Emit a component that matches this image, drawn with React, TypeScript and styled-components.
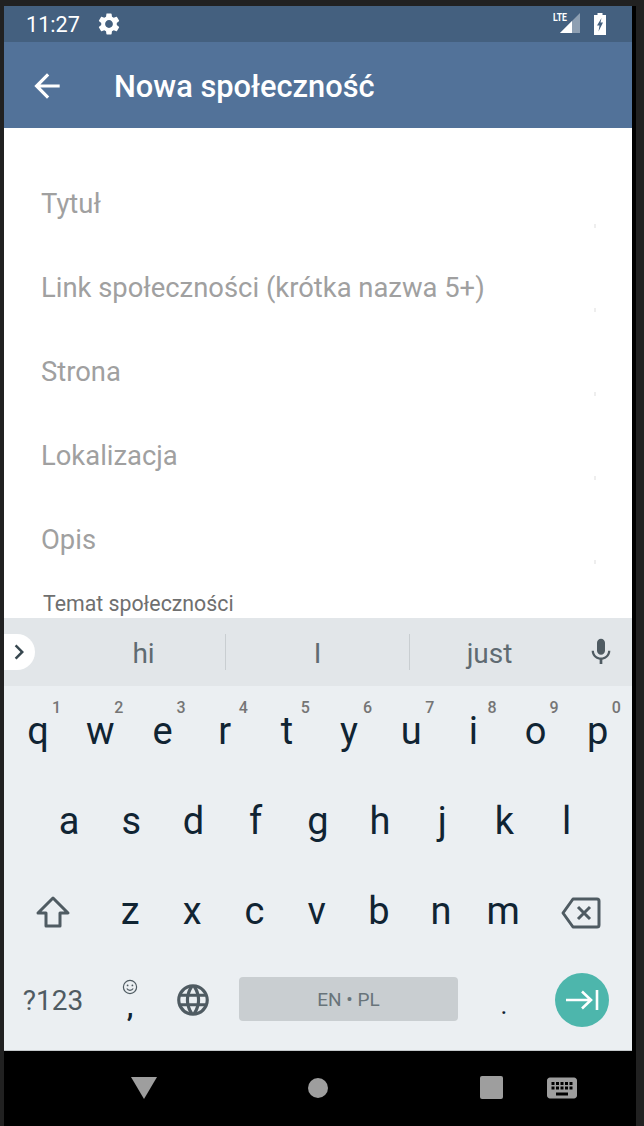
import * as React from "react";
import styled, { createGlobalStyle } from "styled-components";
import { MdArrowBack, MdSettings, MdMic, MdLanguage, MdKeyboard, MdChevronRight } from "react-icons/md";

const GlobalStyle = createGlobalStyle`
  html, body {
    margin: 0;
    padding: 0;
    background: #212121;
    font-family: Roboto, "Liberation Sans", sans-serif;
  }
`;

const FIELDS = ["Tytuł", "Link społeczności (krótka nazwa 5+)", "Strona", "Lokalizacja", "Opis"];

const ROW_ONE = [
  ["q", "1"],
  ["w", "2"],
  ["e", "3"],
  ["r", "4"],
  ["t", "5"],
  ["y", "6"],
  ["u", "7"],
  ["i", "8"],
  ["o", "9"],
  ["p", "0"],
];
const ROW_TWO = ["a", "s", "d", "f", "g", "h", "j", "k", "l"];
const ROW_THREE = ["z", "x", "c", "v", "b", "n", "m"];

const ShiftIcon = () => (
  <svg width="36" height="34" viewBox="0 0 36 34" fill="none">
    <path
      d="M18 3 L33 18 H25 V31 H11 V18 H3 Z"
      stroke="#4f5b62"
      strokeWidth="3"
      strokeLinejoin="round"
    />
  </svg>
);

const BackspaceIcon = () => (
  <svg width="40" height="32" viewBox="0 0 40 32" fill="none">
    <path
      d="M12 2 H36 a2 2 0 0 1 2 2 V28 a2 2 0 0 1 -2 2 H12 L2 16 Z"
      stroke="#4f5b62"
      strokeWidth="3"
      strokeLinejoin="round"
    />
    <path d="M17 10 L29 22 M29 10 L17 22" stroke="#4f5b62" strokeWidth="3" />
  </svg>
);

const SmileIcon = () => (
  <svg width="16" height="16" viewBox="0 0 16 16" fill="none">
    <circle cx="8" cy="8" r="6.6" stroke="#4f5b62" strokeWidth="1.2" />
    <circle cx="5.6" cy="6.4" r="0.9" fill="#4f5b62" />
    <circle cx="10.4" cy="6.4" r="0.9" fill="#4f5b62" />
    <path d="M4.8 9.6 C6 12 10 12 11.2 9.6" stroke="#4f5b62" strokeWidth="1.1" />
  </svg>
);

const NextIcon = () => (
  <svg width="34" height="22" viewBox="0 0 34 22" fill="none">
    <path d="M1 11 H25 M17 2.5 L26 11 L17 19.5" stroke="#fff" strokeWidth="2.6" />
    <path d="M32 1 V21" stroke="#fff" strokeWidth="2.6" />
  </svg>
);

const LteIcon = () => (
  <svg width="28" height="22" viewBox="0 0 28 22">
    <path d="M27 0 V20 H7 Z" fill="#fff" fillOpacity="0.4" />
    <path d="M19 8 V20 H7 Z" fill="#fff" />
    <text x="0" y="8" fontFamily="Roboto, sans-serif" fontSize="10" fontWeight="700" fill="#fff" textLength="14" lengthAdjust="spacingAndGlyphs">
      LTE
    </text>
  </svg>
);

const BatteryIcon = () => (
  <svg width="12" height="22" viewBox="0 0 12 22">
    <path d="M3.5 0 H8.5 V2 H12 V22 H0 V2 H3.5 Z" fill="#fff" />
    <path d="M7.5 5 L3 12.5 H5.5 L4.5 18.5 L9 9.5 H6.5 Z" fill="#44607f" />
  </svg>
);

export default function App() {
  return (
    <>
      <GlobalStyle />
      <Frame>
        <Screen>
          <StatusBar>
            <Clock>11:27</Clock>
            <MdSettings size={26} color="#fff" />
            <StatusRight>
              <LteIcon />
              <BatteryIcon />
            </StatusRight>
          </StatusBar>
          <AppBar>
            <MdArrowBack size={38} color="#fff" />
            <Title>Nowa społeczność</Title>
          </AppBar>
          <Form>
            {FIELDS.map((label) => (
              <Field key={label}>{label}</Field>
            ))}
            <SectionLabel>Temat społeczności</SectionLabel>
          </Form>
          <Suggestions>
            <Expand>
              <MdChevronRight size={30} color="#37474f" />
            </Expand>
            <FirstSuggestion>hi</FirstSuggestion>
            <Divider />
            <Suggestion>I</Suggestion>
            <Divider />
            <LastSuggestion>just</LastSuggestion>
            <MicSlot>
              <MdMic size={32} color="#4f5b62" />
            </MicSlot>
          </Suggestions>
          <Keys>
            <NumberRow>
              {ROW_ONE.map(([letter, hint]) => (
                <Key key={letter}>
                  {letter}
                  <Hint>{hint}</Hint>
                </Key>
              ))}
            </NumberRow>
            <HomeRow>
              {ROW_TWO.map((letter) => (
                <Key key={letter}>{letter}</Key>
              ))}
            </HomeRow>
            <ShiftRow>
              <ShiftKey>
                <ShiftIcon />
              </ShiftKey>
              {ROW_THREE.map((letter) => (
                <Key key={letter}>{letter}</Key>
              ))}
              <BackspaceKey>
                <BackspaceIcon />
              </BackspaceKey>
            </ShiftRow>
            <BottomRow>
              <Symbols>?123</Symbols>
              <Comma>
                <SmileIcon />
                <CommaGlyph>,</CommaGlyph>
              </Comma>
              <Key>
                <MdLanguage size={38} color="#4f5b62" />
              </Key>
              <SpaceBar>EN • PL</SpaceBar>
              <Period>.</Period>
              <Key>
                <NextButton>
                  <NextIcon />
                </NextButton>
              </Key>
            </BottomRow>
          </Keys>
          <NavBar>
            <BackTriangle />
            <HomeDot />
            <RecentSquare />
            <KeyboardSlot>
              <MdKeyboard size={36} color="#9e9e9e" />
            </KeyboardSlot>
          </NavBar>
        </Screen>
      </Frame>
    </>
  );
}

const Frame = styled.div`
  width: 644px;
  height: 1126px;
  padding: 6px 0 0 4px;
  box-sizing: border-box;
  overflow: hidden;
`;

const Screen = styled.div`
  width: 628px;
  height: 1120px;
  display: flex;
  flex-direction: column;
  background: #fff;
  box-shadow: 4px 0 0 #000;
`;

const StatusBar = styled.div`
  height: 36px;
  flex-shrink: 0;
  display: flex;
  align-items: center;
  gap: 16px;
  padding: 0 26px 0 22px;
  background: #44607f;
`;

const Clock = styled.span`
  color: #fff;
  font-size: 21.6px;
`;

const StatusRight = styled.div`
  margin-left: auto;
  display: flex;
  align-items: center;
  gap: 13px;
`;

const AppBar = styled.div`
  height: 86px;
  flex-shrink: 0;
  display: flex;
  align-items: center;
  padding: 2px 0 0 24px;
  box-sizing: border-box;
  background: #527299;
`;

const Title = styled.h1`
  margin: 0 0 0 48px;
  color: #fff;
  font-size: 30.8px;
  font-weight: 500;
`;

const Form = styled.div`
  height: 490px;
  flex-shrink: 0;
  padding: 34px 0 0 37px;
  box-sizing: border-box;
  overflow: hidden;
`;

const Field = styled.div`
  position: relative;
  height: 84px;
  line-height: 84px;
  color: #a0a0a0;
  font-size: 27.4px;

  &::after {
    content: "";
    position: absolute;
    right: 36px;
    bottom: 18px;
    width: 2px;
    height: 4px;
    background: #eeeeee;
  }
`;

const SectionLabel = styled.div`
  margin: 9px 0 0 2px;
  color: #6f6f6f;
  font-size: 21.3px;
  line-height: 26px;
`;

const Suggestions = styled.div`
  height: 68px;
  flex-shrink: 0;
  display: grid;
  grid-template-columns: 42px 179px 1px 183px 1px 171px 51px;
  align-items: center;
  background: #e2e6e9;
`;

const Expand = styled.div`
  width: 31px;
  height: 36px;
  display: flex;
  align-items: center;
  justify-content: flex-start;
  background: #fff;
  border-radius: 0 18px 18px 0;
`;

const Suggestion = styled.div`
  padding-top: 3px;
  text-align: center;
  color: #5f6b72;
  font-size: 28px;
`;

const FirstSuggestion = styled(Suggestion)`
  padding-left: 16px;
`;

const LastSuggestion = styled(Suggestion)`
  padding-right: 12px;
`;

const Divider = styled.div`
  height: 36px;
  background: #c9ced1;
`;

const MicSlot = styled.div`
  display: flex;
  justify-content: center;
  padding-right: 12px;
`;

const Keys = styled.div`
  height: 364px;
  flex-shrink: 0;
  display: grid;
  grid-template-rows: 90px 90px 90px 94px;
  background: #ebeff2;
`;

const NumberRow = styled.div`
  display: grid;
  grid-template-columns: repeat(10, 62.2px);
  padding: 0 3px;
`;

const HomeRow = styled.div`
  display: grid;
  grid-template-columns: repeat(9, 62.2px);
  padding: 0 34px;
`;

const ShiftRow = styled.div`
  display: grid;
  grid-template-columns: 95px repeat(7, 62.2px) 97px;
`;

const BottomRow = styled.div`
  display: grid;
  grid-template-columns: 98px 56px 70px 230px 92px 64px;
  align-items: center;
  padding-bottom: 6px;
`;

const Key = styled.div`
  position: relative;
  display: flex;
  align-items: center;
  justify-content: center;
  color: #102433;
  font-size: 38px;
`;

const ShiftKey = styled(Key)`
  padding: 2px 0 0 3px;
`;

const BackspaceKey = styled(Key)`
  padding: 3px 3px 0 0;
`;

const Hint = styled.span`
  position: absolute;
  top: 12px;
  right: 8px;
  color: #757575;
  font-size: 16px;
  font-weight: 500;
`;

const Symbols = styled(Key)`
  color: #4f5b62;
  font-size: 28px;
`;

const Comma = styled(Key)`
  flex-direction: column;
  font-size: 30px;
  height: 60px;
  margin-bottom: 4px;
`;

const CommaGlyph = styled.span`
  line-height: 22px;
  font-weight: 500;
`;

const SpaceBar = styled.div`
  height: 44px;
  margin: 0 0 2px 11px;
  display: flex;
  align-items: center;
  justify-content: center;
  background: #c9ced1;
  border-radius: 4px;
  color: #68747a;
  font-size: 19px;
`;

const Period = styled(Key)`
  font-size: 26px;
  padding-top: 10px;
`;

const NextButton = styled.div`
  width: 54px;
  height: 54px;
  display: flex;
  align-items: center;
  justify-content: center;
  background: #4db6ac;
  border-radius: 50%;
`;

const NavBar = styled.div`
  height: 76px;
  flex-shrink: 0;
  display: grid;
  grid-template-columns: 280px 0 0 1fr;
  align-items: center;
  padding-bottom: 2px;
  background: #000;
  border-top: 1px solid #c4c8ca;
  box-sizing: border-box;
`;

const BackTriangle = styled.div`
  justify-self: center;
  width: 0;
  height: 0;
  border-left: 13px solid transparent;
  border-right: 13px solid transparent;
  border-top: 22px solid #9e9e9e;
`;

const HomeDot = styled.div`
  width: 20px;
  height: 20px;
  margin-left: 24px;
  border-radius: 50%;
  background: #9e9e9e;
`;

const RecentSquare = styled.div`
  width: 23px;
  height: 23px;
  margin-left: 196px;
  border-radius: 2px;
  background: #9e9e9e;
`;

const KeyboardSlot = styled.div`
  display: flex;
  justify-content: flex-end;
  padding-right: 52px;
`;
